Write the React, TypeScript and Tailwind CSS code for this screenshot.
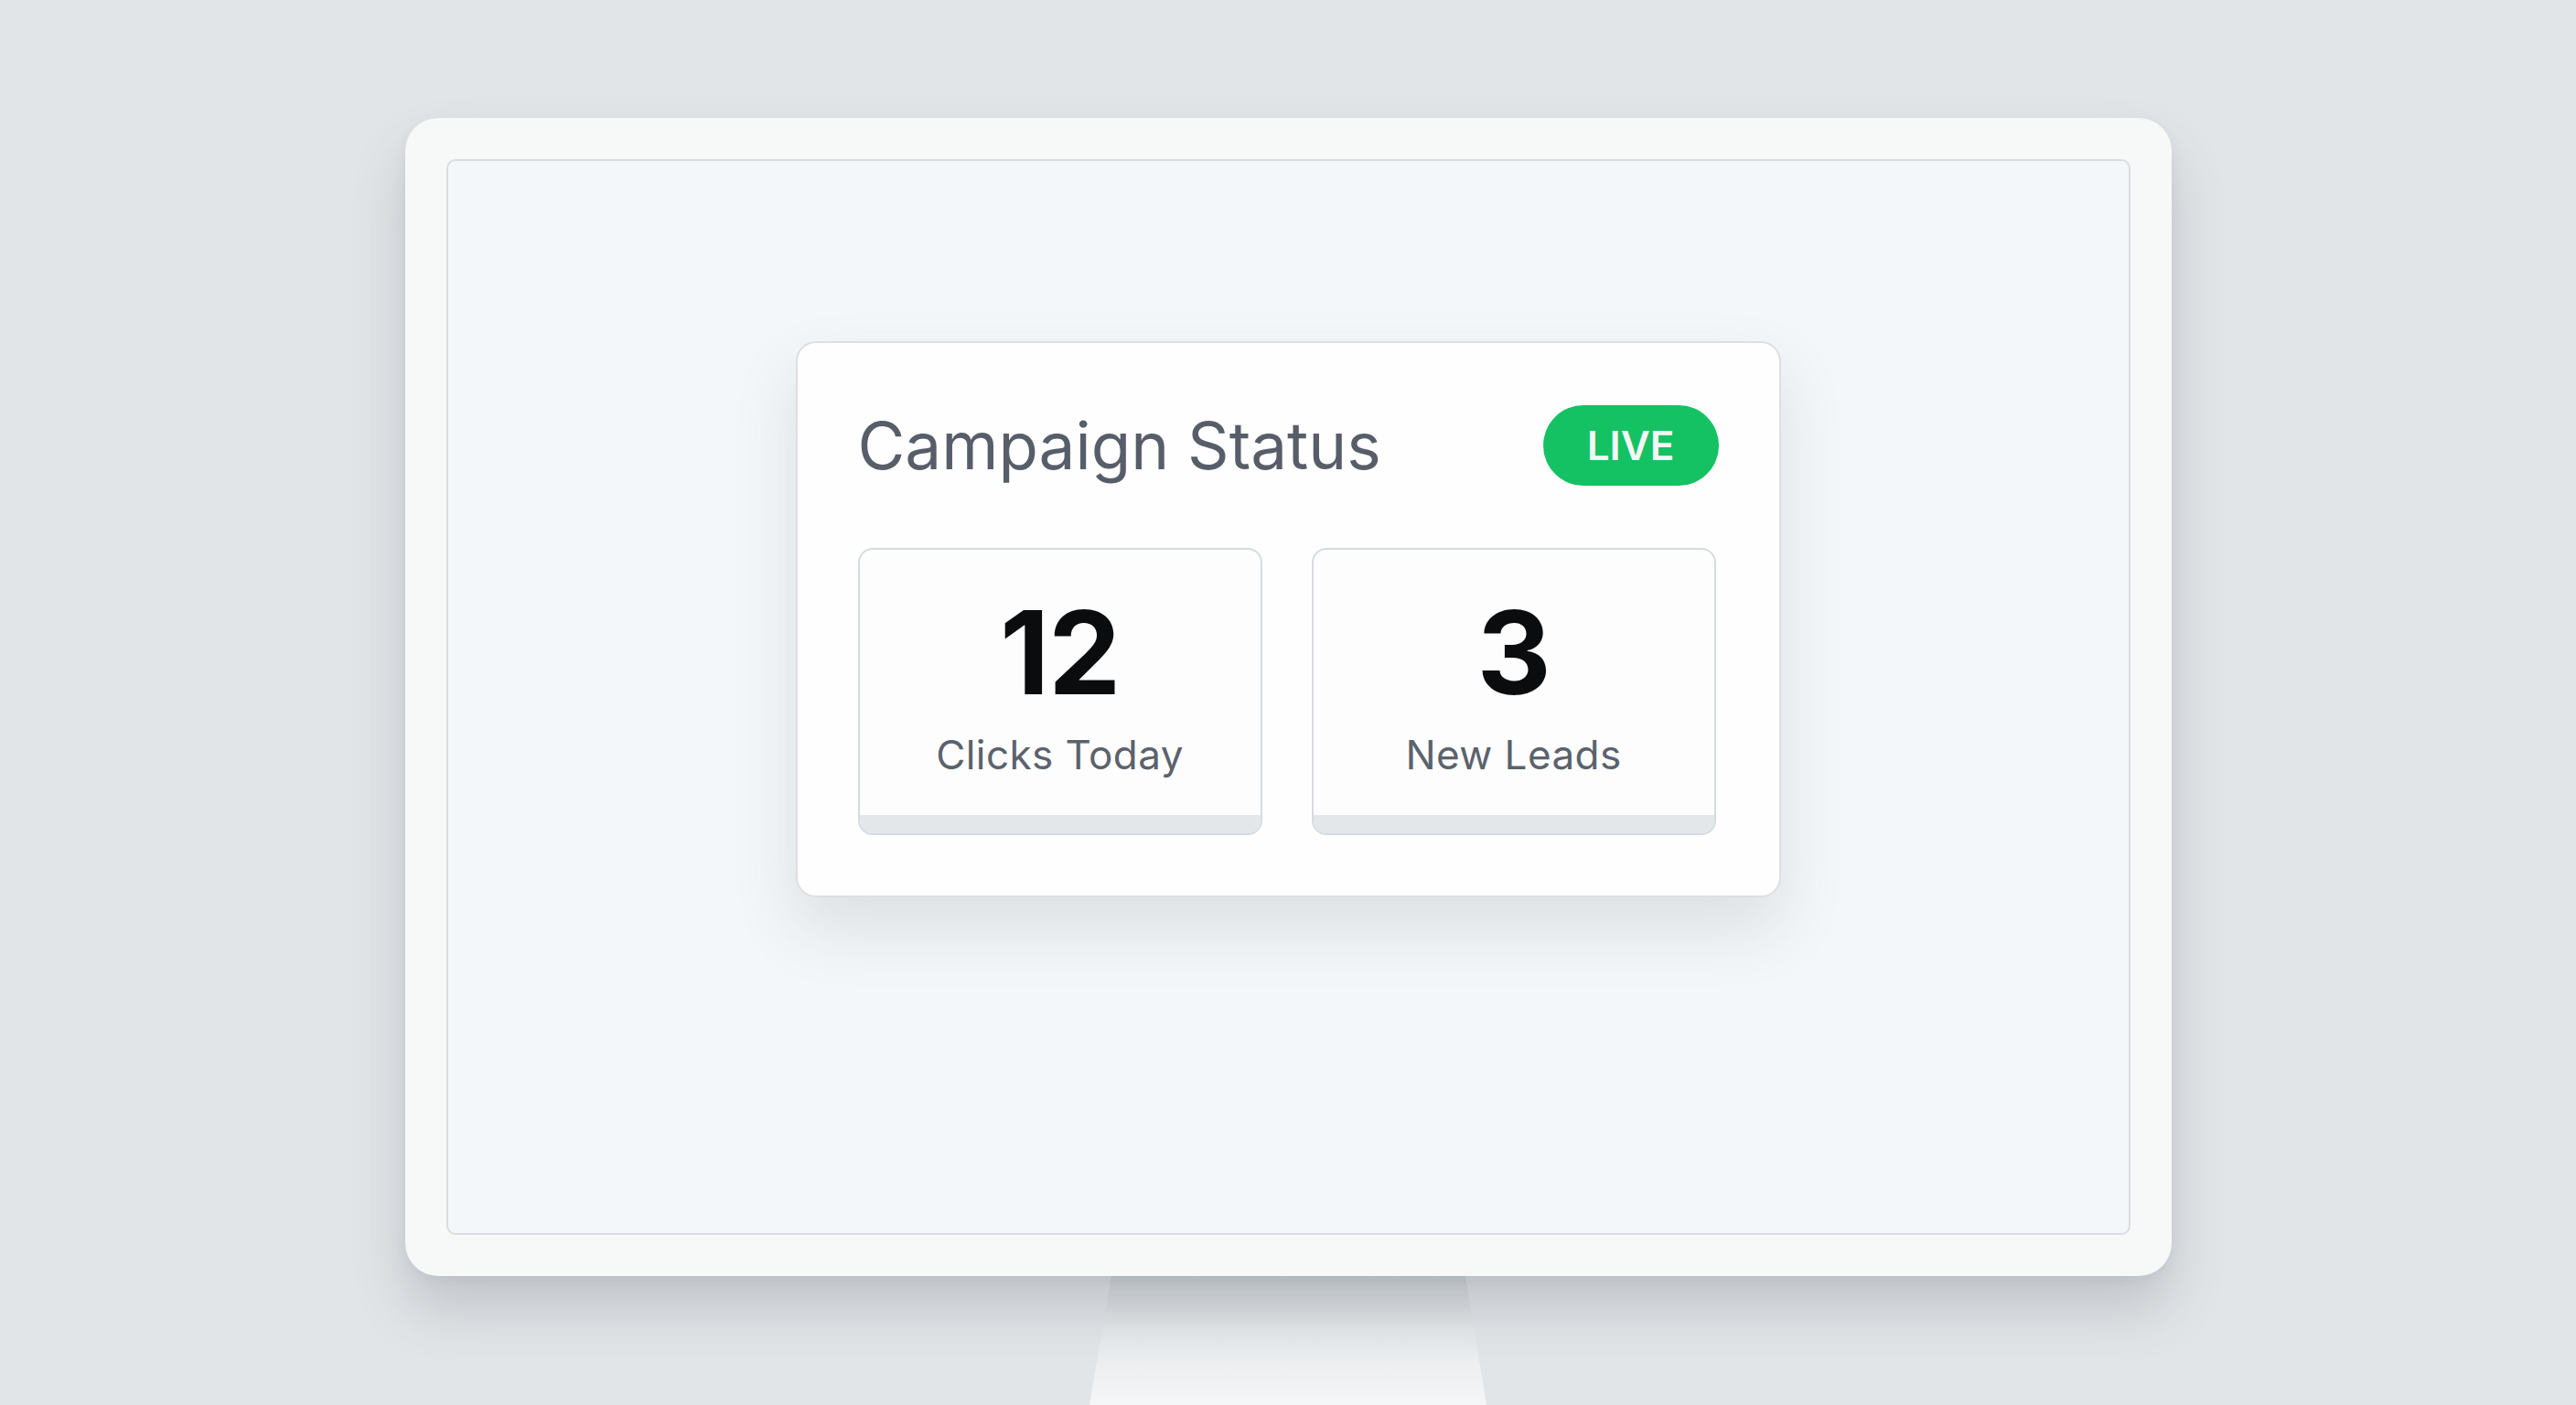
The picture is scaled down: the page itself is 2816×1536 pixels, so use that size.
import React from "react";

function StatBox({ value, label }: { value: string; label: string }) {
  return (
    <div className="flex h-[314px] w-[442px] flex-col items-center overflow-hidden rounded-[16px] border-2 border-[#d7dbde] bg-[#fdfdfe]">
      <div className="mt-[49px] font-['Inter',sans-serif] text-[126px] font-bold leading-none tracking-[-0.01em] text-[#0b0c0d]">
        {value}
      </div>
      <div className="mt-[27px] font-['Inter',sans-serif] text-[44px] leading-none tracking-[0.01em] text-[#5b626c]">
        {label}
      </div>
      <div className="mt-auto h-[20px] w-full bg-[#e3e7ea]" />
    </div>
  );
}

export default function App() {
  return (
    <div className="relative flex h-[1536px] w-[2816px] flex-col items-center overflow-hidden bg-[#e2e5e8] pt-[129px]">
      <div className="relative z-10 flex h-[1266px] w-[1931px] rounded-[36px] bg-[#f7f8f8] p-[45px] shadow-[0_36px_60px_rgba(60,70,80,0.2),0_4px_14px_rgba(60,70,80,0.06)]">
        <div className="flex flex-1 justify-center rounded-[10px] border-2 border-[#d9dde0] bg-[#f4f7f9] pt-[197px]">
          <div className="flex h-[608px] w-[1077px] flex-col rounded-[22px] border-2 border-[#dcdfe2] bg-[#fefefe] px-[66px] pt-[68px] shadow-[0_34px_70px_rgba(60,70,80,0.13)]">
            <div className="flex h-[88px] items-center justify-between">
              <div className="font-['Inter',sans-serif] text-[71px] leading-none text-[#575e69]">
                Campaign Status
              </div>
              <div className="flex h-[88px] w-[192px] items-center justify-center rounded-full bg-[#14c163] font-['Inter',sans-serif] text-[44px] font-semibold leading-none text-[#f4f6f5]">
                LIVE
              </div>
            </div>
            <div className="mt-[68px] flex gap-[54px]">
              <StatBox value="12" label="Clicks Today" />
              <StatBox value="3" label="New Leads" />
            </div>
          </div>
        </div>
      </div>
      <div className="h-[141px] w-[434px] bg-[linear-gradient(180deg,#d2d6da_0%,#e6e9eb_45%,#f5f6f7_100%)] [clip-path:polygon(5.5%_0,94.7%_0,100%_100%,0_100%)]" />
    </div>
  );
}
